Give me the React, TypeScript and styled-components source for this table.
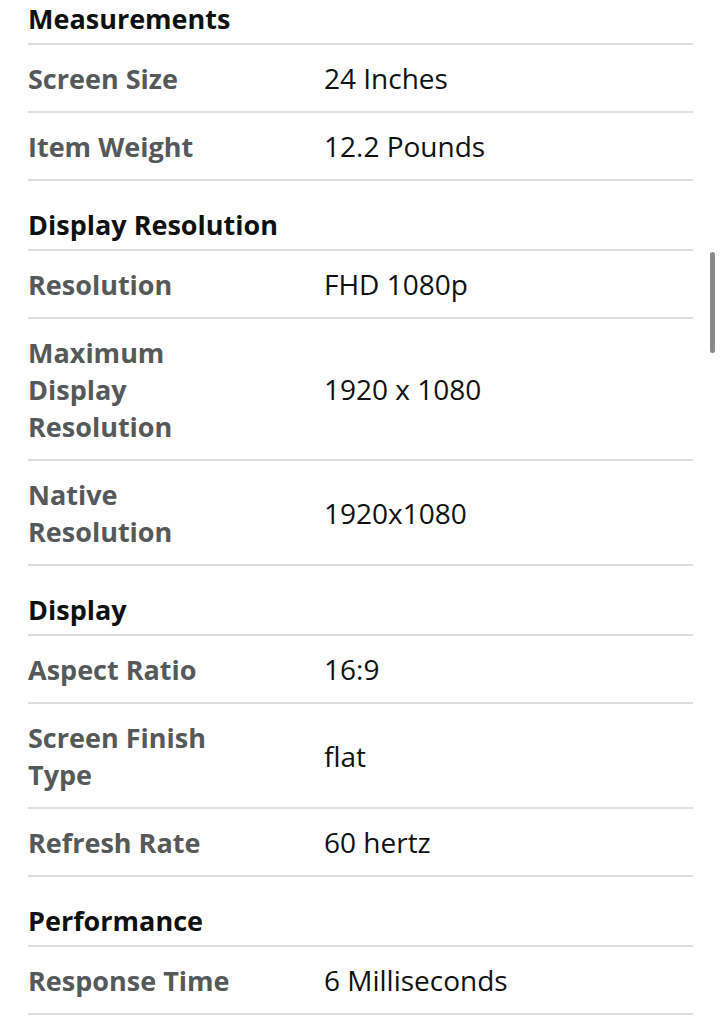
import React from "react";
import styled, { createGlobalStyle } from "styled-components";

const Global = createGlobalStyle`
  html, body { margin: 0; padding: 0; background: #ffffff; }
  body { font-family: "Open Sans", "Noto Sans", Arial, sans-serif; -webkit-font-smoothing: antialiased; }
  * { box-sizing: border-box; }
`;

const Page = styled.div`
  position: relative;
  width: 721px;
  height: 1024px;
  overflow: hidden;
  background: #ffffff;
`;

const Content = styled.div`
  margin: 0 28px;
  display: flex;
  flex-direction: column;
`;

const Section = styled.section<{ $first?: boolean }>`
  display: flex;
  flex-direction: column;
  padding-top: ${(p) => (p.$first ? "0" : "25px")};
`;

const Heading = styled.h2`
  margin: 0;
  padding: 0 0 6px;
  font-size: 27px;
  line-height: 37px;
  font-weight: 700;
  color: #0f1111;
  border-bottom: 2px solid #dcdfdf;
`;

const Row = styled.div`
  display: grid;
  grid-template-columns: 296px 1fr;
  align-items: center;
  padding: 15px 0 14px;
  border-bottom: 2px solid #dcdfdf;
`;

const Label = styled.div`
  padding-right: 62px;
  font-size: 27px;
  line-height: 37px;
  font-weight: 700;
  color: #565959;
`;

const Value = styled.div`
  font-size: 28px;
  line-height: 37px;
  font-weight: 400;
  color: #0f1111;
`;

const Scrollbar = styled.div`
  position: absolute;
  left: 710px;
  top: 252px;
  width: 5px;
  height: 101px;
  border-radius: 3px;
  background: #8a8a8a;
`;

type Spec = { title: string; rows: [string, string][] };

const data: Spec[] = [
  {
    title: "Measurements",
    rows: [
      ["Screen Size", "24 Inches"],
      ["Item Weight", "12.2 Pounds"],
    ],
  },
  {
    title: "Display Resolution",
    rows: [
      ["Resolution", "FHD 1080p"],
      ["Maximum Display Resolution", "1920 x 1080"],
      ["Native Resolution", "1920x1080"],
    ],
  },
  {
    title: "Display",
    rows: [
      ["Aspect Ratio", "16:9"],
      ["Screen Finish Type", "flat"],
      ["Refresh Rate", "60 hertz"],
    ],
  },
  {
    title: "Performance",
    rows: [["Response Time", "6 Milliseconds"]],
  },
];

export default function App() {
  return (
    <Page>
      <Global />
      <Content>
        {data.map((s, i) => (
          <Section key={s.title} $first={i === 0}>
            <Heading>{s.title}</Heading>
            {s.rows.map(([l, v]) => (
              <Row key={l}>
                <Label>{l}</Label>
                <Value>{v}</Value>
              </Row>
            ))}
          </Section>
        ))}
      </Content>
      <Scrollbar />
    </Page>
  );
}
